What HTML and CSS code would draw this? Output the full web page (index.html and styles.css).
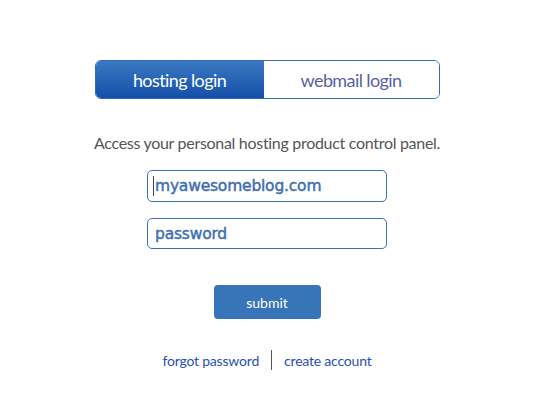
FILE: index.html
```html
<!DOCTYPE html>
<html>
<head>
<meta charset="utf-8">
<link rel="stylesheet" href="styles.css">
</head>
<body>
<div class="page">
  <div class="tabs">
    <div class="tab tab-active">hosting login</div>
    <div class="tab tab-inactive">webmail login</div>
  </div>
  <p class="intro">Access your personal hosting product control panel.</p>
  <form class="form">
    <div class="field"><span class="caret"></span>myawesomeblog.com</div>
    <div class="field">password</div>
    <div class="submit">submit</div>
  </form>
  <div class="links">
    <a class="link">forgot password</a>
    <span class="sep"></span>
    <a class="link">create account</a>
  </div>
</div>
</body>
</html>
```
FILE: styles.css
```css
html, body { margin: 0; padding: 0; background: #fff; }
body { font-family: "Lato", "Open Sans", sans-serif; }
.page {
  width: 534px;
  height: 416px;
  display: flex;
  flex-direction: column;
  align-items: center;
  padding-top: 60px;
  box-sizing: border-box;
}
.tabs {
  display: flex;
  width: 345px;
  height: 39px;
  border: 1px solid #2f6bb8;
  border-radius: 6px;
  overflow: hidden;
  box-sizing: border-box;
}
.tab {
  display: flex;
  align-items: center;
  justify-content: center;
  font-size: 18px;
  letter-spacing: -0.6px;
}
.tab-active {
  width: 168px;
  color: #fff;
  background: linear-gradient(#3b78c1, #1450a9);
}
.tab-inactive {
  flex: 1;
  color: #5a5fa6;
  background: #fff;
}
.intro {
  margin: 34px 0 0 0;
  font-size: 16px;
  color: #555;
  letter-spacing: -0.3px;
  line-height: 20px;
}
.form {
  display: flex;
  flex-direction: column;
  align-items: center;
  margin-top: 17px;
}
.field {
  width: 240px;
  height: 32px;
  border: 1px solid #3a72b8;
  border-radius: 5px;
  box-sizing: border-box;
  display: flex;
  align-items: center;
  padding-left: 5px;
  font-family: "DejaVu Sans", sans-serif;
  font-size: 15.5px;
  -webkit-text-stroke: 0.45px #3f6eb0;
  color: #3f6eb0;
  margin-bottom: 16px;
  letter-spacing: -0.2px;
}
.field + .field { height: 31px; padding-left: 7px; }
.caret {
  display: inline-block;
  width: 1px;
  height: 20px;
  background: #444;
  margin-right: 1px;
  -webkit-text-stroke: 0;
}
.submit {
  margin-top: 20px;
  width: 107px;
  height: 34px;
  border-radius: 4px;
  background: #3874b8;
  color: #fff;
  font-size: 14px;
  display: flex;
  align-items: center;
  justify-content: center;
}
.links {
  display: flex;
  align-items: center;
  margin-top: 31px;
  font-size: 14px;
  letter-spacing: -0.2px;
}
.link { color: #2a4fb2; }
.sep {
  display: inline-block;
  width: 1px;
  height: 20px;
  background: #555;
  margin: 0 12px;
}
```
